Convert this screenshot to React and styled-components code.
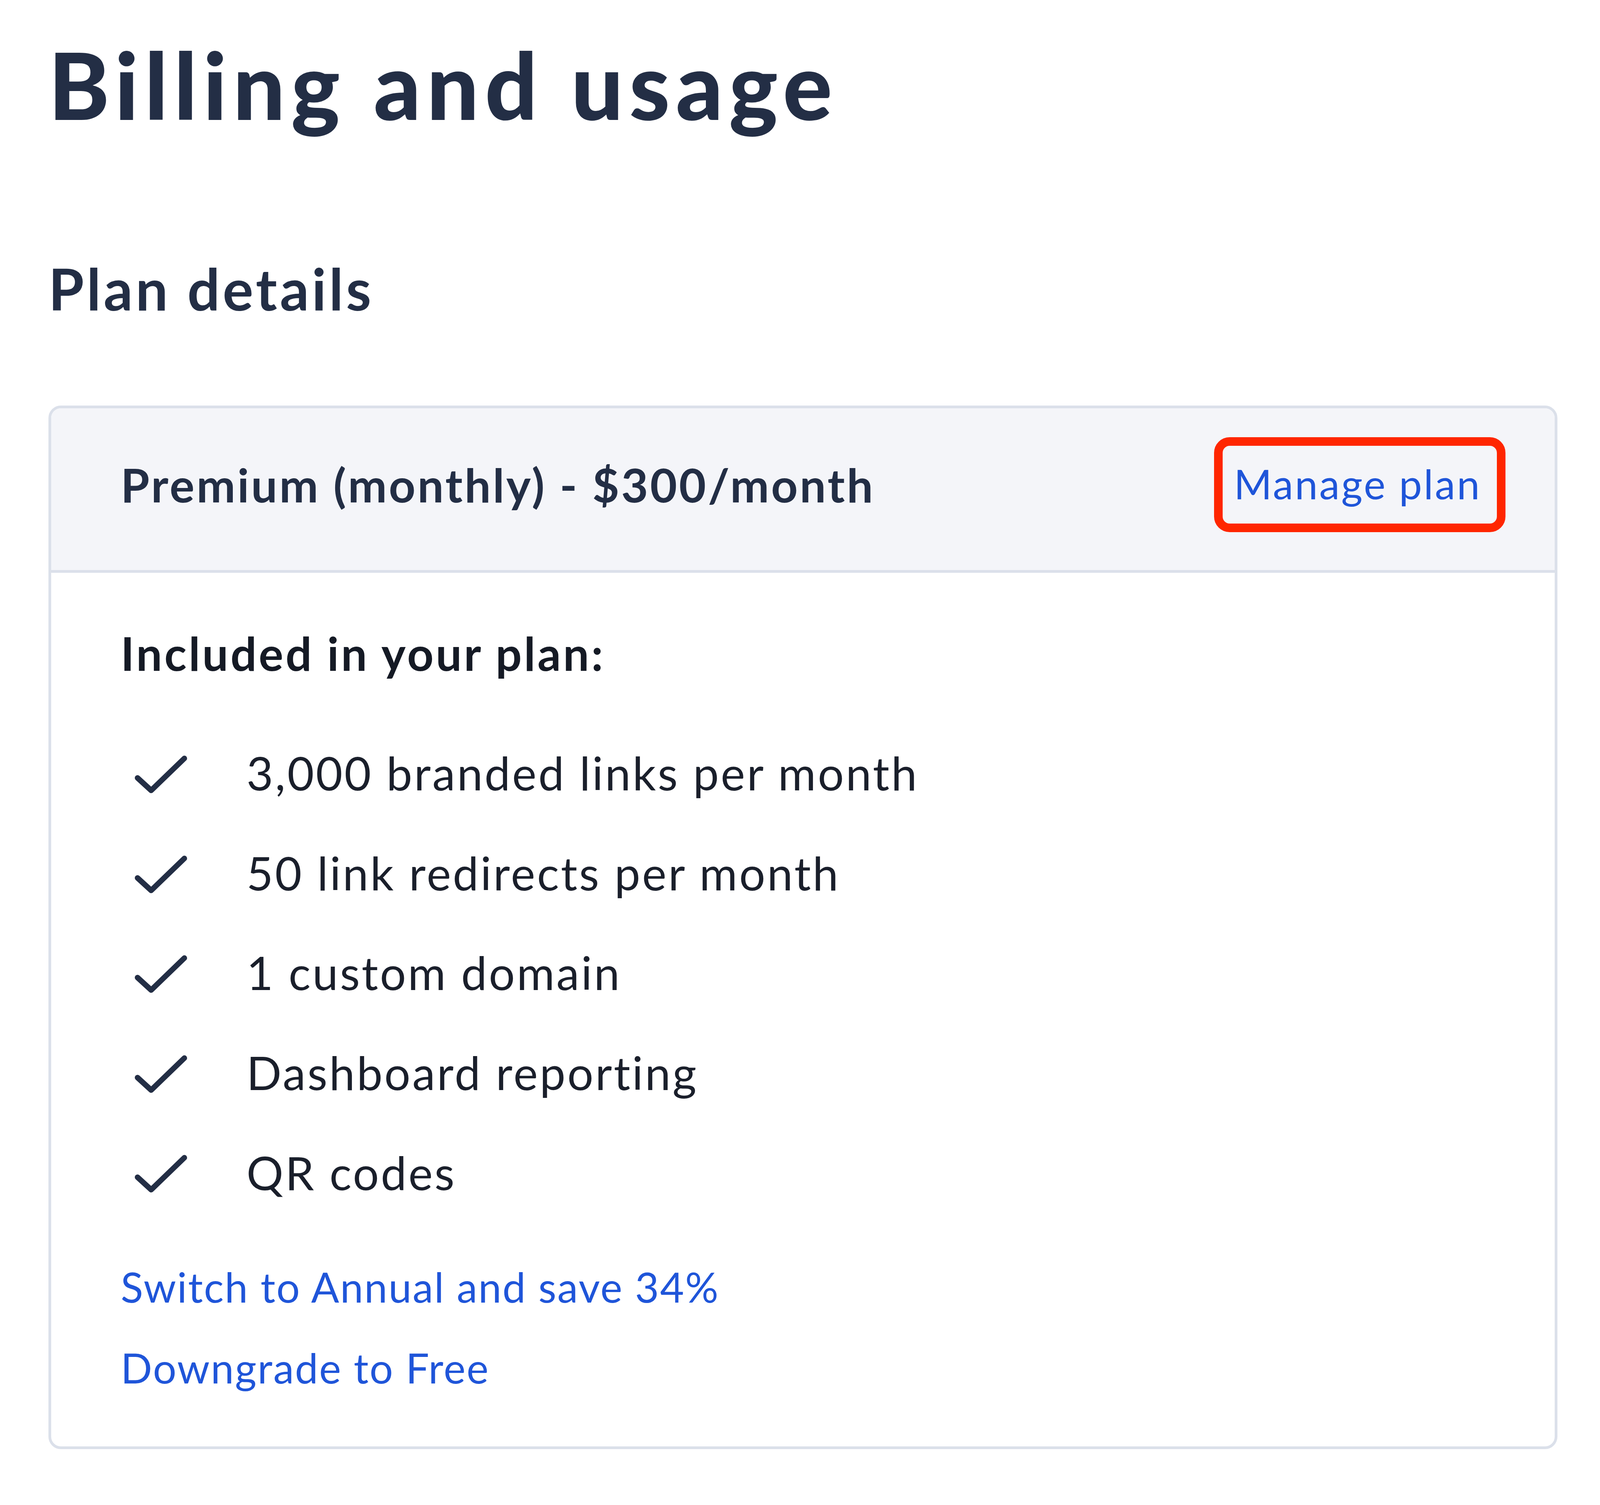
import React from "react";
import styled, { createGlobalStyle } from "styled-components";

const GlobalStyle = createGlobalStyle`
  html, body {
    margin: 0;
    padding: 0;
    background: #ffffff;
  }
  body {
    font-family: Lato, "Liberation Sans", sans-serif;
    color: #232e45;
  }
`;

const Page = styled.div`
  padding: 74px 109px 140px 124px;
`;

const Title = styled.h1`
  margin: 0;
  font-size: 236px;
  line-height: 1.2;
  font-weight: 900;
  letter-spacing: 15px;
  color: #232e45;
`;

const SectionTitle = styled.h2`
  margin: 293px 0 0;
  font-size: 147px;
  line-height: 1.2;
  font-weight: 700;
  letter-spacing: 7px;
  color: #232e45;
`;

const Card = styled.section`
  margin-top: 211px;
  border: 7px solid #dbe0ea;
  border-radius: 32px;
  overflow: hidden;
`;

const CardHeader = styled.div`
  display: flex;
  align-items: center;
  justify-content: space-between;
  padding: 74px 126px 97px 178px;
  background: #f4f5f9;
  border-bottom: 7px solid #dbe0ea;
`;

const PlanName = styled.div`
  font-size: 119px;
  line-height: 1.2;
  font-weight: 700;
  letter-spacing: 5px;
  color: #232e45;
`;

const ManageLink = styled.a`
  display: block;
  padding: 33px 40px 40px 29px;
  border: 22px solid #ff2600;
  border-radius: 40px;
  font-size: 105px;
  line-height: 1.2;
  letter-spacing: 4px;
  color: #1f55d9;
  text-decoration: none;
  cursor: pointer;
`;

const CardBody = styled.div`
  padding: 135px 178px 137px;
`;

const Included = styled.div`
  font-size: 118px;
  line-height: 1.2;
  font-weight: 700;
  letter-spacing: 5.5px;
  color: #151a25;
`;

const FeatureList = styled.ul`
  list-style: none;
  margin: 165px 0 0;
  padding: 0;
  display: flex;
  flex-direction: column;
  gap: 114px;
`;

const Feature = styled.li`
  display: flex;
  align-items: center;
  gap: 152px;
  padding-left: 36px;
  font-size: 118px;
  line-height: 1.2;
  letter-spacing: 4.6px;
  color: #1a1f2b;
`;

const CheckMark = styled.svg`
  flex: none;
  width: 134px;
  height: 100px;
  margin-top: 12px;
`;

const Actions = styled.div`
  display: flex;
  flex-direction: column;
  align-items: flex-start;
  gap: 80px;
  margin-top: 159px;
`;

const ActionLink = styled.a`
  font-size: 106px;
  line-height: 1.2;
  letter-spacing: 2.7px;
  color: #1f55d9;
  text-decoration: none;
  cursor: pointer;
`;

const features = [
  "3,000 branded links per month",
  "50 link redirects per month",
  "1 custom domain",
  "Dashboard reporting",
  "QR codes",
];

const Check = () => (
  <CheckMark viewBox="0 0 134 100" fill="none">
    <polyline
      points="7,57 42,89 127,7"
      stroke="#232e45"
      strokeWidth="14"
      strokeLinecap="round"
      strokeLinejoin="round"
    />
  </CheckMark>
);

export default function App() {
  return (
    <>
      <GlobalStyle />
      <Page>
        <Title>Billing and usage</Title>
        <SectionTitle>Plan details</SectionTitle>
        <Card>
          <CardHeader>
            <PlanName>Premium (monthly) - $300/month</PlanName>
            <ManageLink>Manage plan</ManageLink>
          </CardHeader>
          <CardBody>
            <Included>Included in your plan:</Included>
            <FeatureList>
              {features.map((f) => (
                <Feature key={f}>
                  <Check />
                  <span>{f}</span>
                </Feature>
              ))}
            </FeatureList>
            <Actions>
              <ActionLink>Switch to Annual and save 34%</ActionLink>
              <ActionLink>Downgrade to Free</ActionLink>
            </Actions>
          </CardBody>
        </Card>
      </Page>
    </>
  );
}
